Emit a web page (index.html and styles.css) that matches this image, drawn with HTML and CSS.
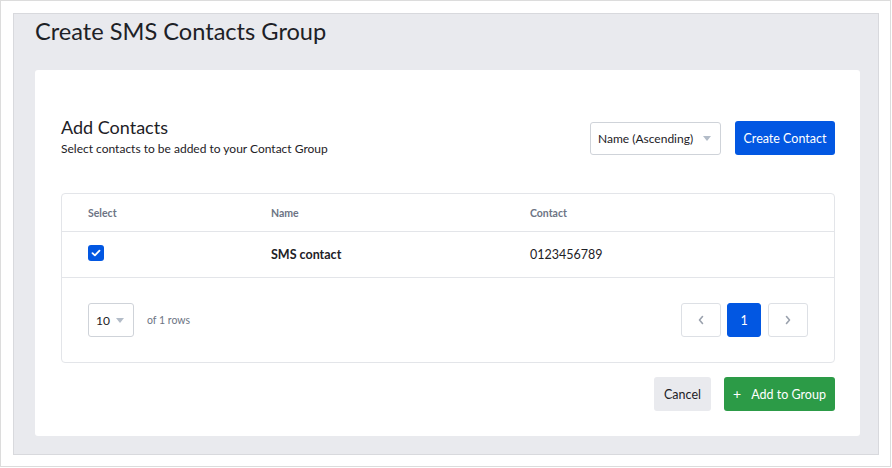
FILE: index.html
```html
<!DOCTYPE html>
<html>
<head>
<meta charset="utf-8">
<link rel="stylesheet" href="styles.css">
</head>
<body>
<div class="frame">
  <div class="panel">
    <h1 class="page-title">Create SMS Contacts Group</h1>
    <div class="card">
      <div class="card-head">
        <div class="head-text">
          <h2 class="section-title">Add Contacts</h2>
          <p class="section-sub">Select contacts to be added to your Contact Group</p>
        </div>
        <div class="head-actions">
          <div class="select sort-select">
            <span>Name (Ascending)</span>
            <span class="caret"></span>
          </div>
          <button class="btn btn-primary">Create Contact</button>
        </div>
      </div>

      <div class="table">
        <div class="row row-head">
          <div>Select</div>
          <div>Name</div>
          <div>Contact</div>
        </div>
        <div class="row row-body">
          <div>
            <span class="checkbox">
              <svg width="10" height="8" viewBox="0 0 10 8"><path d="M1.5 4.2 L3.9 6.4 L8.5 1.6" fill="none" stroke="#fff" stroke-width="1.8" stroke-linecap="round" stroke-linejoin="round"/></svg>
            </span>
          </div>
          <div class="name-cell">SMS contact</div>
          <div>0123456789</div>
        </div>
        <div class="table-foot">
          <div class="foot-left">
            <div class="select size-select">
              <span>10</span>
              <span class="caret"></span>
            </div>
            <span class="rows-info">of 1 rows</span>
          </div>
          <div class="pager">
            <button class="page-btn page-arrow">
              <svg width="8" height="10" viewBox="0 0 8 10"><path d="M5.5 1.5 L2.5 5 L5.5 8.5" fill="none" stroke="#9aa1ad" stroke-width="1.6" stroke-linecap="round" stroke-linejoin="round"/></svg>
            </button>
            <button class="page-btn page-current">1</button>
            <button class="page-btn page-arrow">
              <svg width="8" height="10" viewBox="0 0 8 10"><path d="M2.5 1.5 L5.5 5 L2.5 8.5" fill="none" stroke="#9aa1ad" stroke-width="1.6" stroke-linecap="round" stroke-linejoin="round"/></svg>
            </button>
          </div>
        </div>
      </div>

      <div class="card-actions">
        <button class="btn btn-light">Cancel</button>
        <button class="btn btn-success"><span class="plus">+</span>Add to Group</button>
      </div>
    </div>
  </div>
</div>
</body>
</html>
```

FILE: styles.css
```css
* { box-sizing: border-box; }
html, body { margin: 0; padding: 0; background: #fff; }
body {
  font-family: Lato, "Noto Sans", "Liberation Sans", sans-serif;
  color: #1f2328;
}
.frame {
  width: 891px;
  height: 467px;
  border: 1px solid #dcdcdc;
  padding: 12px 12px 0 12px;
}
.panel {
  width: 866px;
  height: 442px;
  background: #e9eaee;
  border: 1px solid #d8d9dd;
  padding: 0 17px 0 21px;
  display: flex;
  flex-direction: column;
}
.page-title {
  margin: 0;
  height: 56px;
  padding-top: 2px;
  font-size: 23.6px;
  line-height: 30px;
  font-weight: 400;
  color: #1d2126;
}
.card {
  background: #fff;
  border-radius: 3px;
  width: 825px;
  height: 366px;
  padding: 47px 25px 0 26px;
}
.card-head {
  display: flex;
  justify-content: space-between;
  align-items: center;
  height: 40px;
}
.head-text { margin-top: -2px; }
.section-title {
  margin: 0;
  font-size: 18px;
  line-height: 22px;
  font-weight: 400;
  color: #1d2126;
}
.section-sub {
  margin: 3px 0 0 0;
  font-size: 12px;
  line-height: 16px;
  color: #1d2126;
}
.head-actions {
  display: flex;
  align-items: center;
  gap: 14px;
  padding-top: 2px;
}
.select {
  display: flex;
  align-items: center;
  justify-content: space-between;
  border: 1px solid #cfd3d9;
  border-radius: 3px;
  background: #fff;
  height: 33px;
  font-size: 12px;
  color: #1d2126;
}
.sort-select { width: 131px; padding: 0 9px 0 7px; }
.size-select { width: 46px; height: 34px; padding: 0 9px 0 7px; }
.caret {
  width: 0; height: 0;
  border-left: 4px solid transparent;
  border-right: 4px solid transparent;
  border-top: 5px solid #b3bcc8;
}
.btn {
  font-family: inherit;
  border: none;
  border-radius: 3px;
  height: 34px;
  font-size: 12.5px;
  padding: 0;
  cursor: pointer;
  display: inline-flex;
  align-items: center;
  justify-content: center;
}
.btn-primary { background: #0257e2; color: #fff; width: 100px; }
.btn-light { background: #e9eaee; color: #1d2126; width: 57px; }
.btn-success { background: #2c9b47; color: #fff; width: 111px; }
.plus { font-size: 14px; margin-right: 10px; margin-top: -2px; }

.table {
  margin-top: 36px;
  border: 1px solid #e3e5e9;
  border-radius: 4px;
}
.row {
  display: grid;
  grid-template-columns: 183px 259px 1fr;
  padding-left: 26px;
  align-items: center;
  border-bottom: 1px solid #e3e5e9;
}
.row-head {
  height: 38px;
  font-size: 10.5px;
  font-weight: 700;
  color: #6d7484;
}
.row-body {
  height: 46px;
  font-size: 12.5px;
  color: #1d2126;
}
.name-cell { font-weight: 700; }
.checkbox {
  width: 16px; height: 16px;
  border-radius: 3px;
  background: #0257e2;
  display: flex;
  align-items: center;
  justify-content: center;
  margin-top: -4px;
}
.table-foot {
  height: 84px;
  display: flex;
  justify-content: space-between;
  align-items: center;
  padding: 0 26px;
}
.foot-left { display: flex; align-items: center; gap: 13px; }
.rows-info { font-size: 10.5px; color: #6d7484; }
.pager { display: flex; align-items: center; }
.page-btn {
  font-family: inherit;
  height: 34px;
  border-radius: 3px;
  border: 1px solid #dde0e5;
  background: #fff;
  padding: 0;
  display: flex;
  align-items: center;
  justify-content: center;
}
.page-arrow { width: 40px; }
.page-current {
  width: 34px;
  margin: 0 7px 0 6px;
  background: #0257e2;
  border-color: #0257e2;
  color: #fff;
  font-size: 12.5px;
}
.card-actions {
  display: flex;
  justify-content: flex-end;
  gap: 13px;
  margin-top: 14px;
}
```
